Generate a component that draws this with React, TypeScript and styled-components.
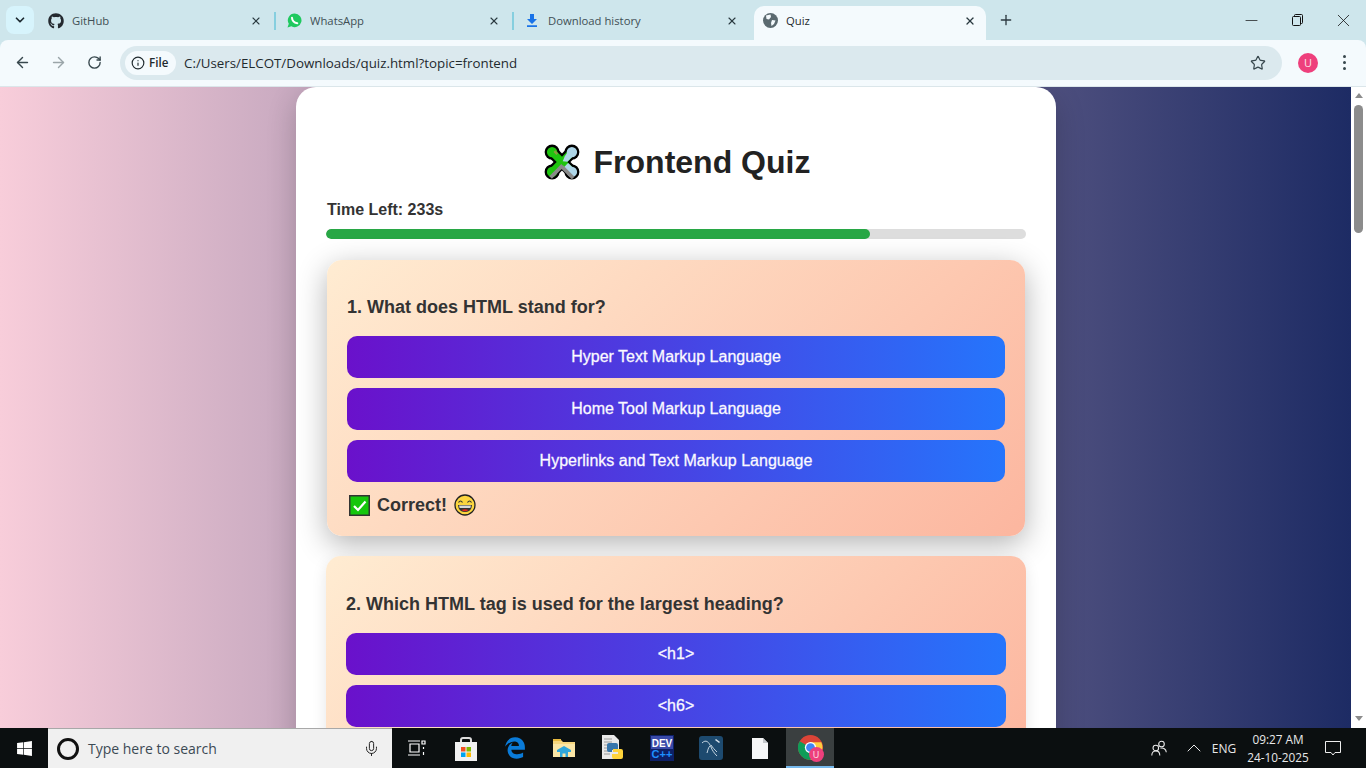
import React from "react";
import styled, { createGlobalStyle } from "styled-components";
import { FaGithub, FaWindows, FaEdgeLegacy } from "react-icons/fa";
import { ArrowLeft, ArrowRight, RotateCw, Info, Star, X, Plus, Minus, Mic, ChevronDown, ChevronUp } from "lucide-react";

const Global = createGlobalStyle`
  html, body { margin: 0; padding: 0; height: 100%; overflow: hidden; }
  #root { height: 100%; }
  * { box-sizing: border-box; }
`;

const Win = styled.div`
  width: 1366px; height: 768px; display: flex; flex-direction: column; overflow: hidden;
  background: #cee6ec; font-family: "Open Sans", "Noto Sans", sans-serif;
`;
const Strip = styled.div`
  height: 40px; flex: none; display: flex; align-items: flex-end; padding-left: 6px; background: #cee6ec;
`;
const TabMenu = styled.button`
  width: 28px; height: 28px; margin-bottom: 6px; border: 0; padding: 0; border-radius: 8px; background: #d7f4fc;
  display: flex; align-items: center; justify-content: center; color: #1d2a30; flex: none;
`;
const Tab = styled.div<{ $active?: boolean; $sep?: boolean }>`
  width: ${p => (p.$active ? 232 : 238)}px; height: 34px; flex: none; display: flex; align-items: center; position: relative;
  padding: 0 8px 5px ${p => (p.$active ? 8 : 14)}px;
  background: ${p => (p.$active ? "#f4fafd" : "transparent")};
  border-radius: ${p => (p.$active ? "10px 10px 0 0" : "0")};
  font-size: 11.3px; color: ${p => (p.$active ? "#1f2a2e" : "#3f4f55")};
  margin-left: ${p => (p.$active ? "6px" : "0")};
  ${p => p.$sep ? `&::after { content: ""; position: absolute; right: -4px; top: 6px; height: 18px; width: 2px; background: #86cfdf; }` : ""}
`;
const FavSlot = styled.span`
  width: 16px; height: 16px; flex: none; margin-right: 8px; display: flex; align-items: center; justify-content: center;
`;
const TabTitle = styled.span`flex: 1; white-space: nowrap; overflow: hidden;`;
const TabClose = styled.span`
  width: 16px; height: 16px; flex: none; display: flex; align-items: center; justify-content: center; color: #2a3a40;
`;
const NewTab = styled.span`
  width: 28px; height: 28px; margin: 0 0 6px 6px; display: flex; align-items: center; justify-content: center; color: #2c3a40; flex: none;
`;
const WinControls = styled.div`
  margin-left: auto; height: 40px; display: flex; align-self: flex-start; align-items: center; color: #111;
`;
const WinBtn = styled.span`
  width: 46px; height: 40px; display: flex; align-items: center; justify-content: center;
`;
const Toolbar = styled.div`
  height: 47px; flex: none; background: #f4fafd; border-radius: 8px 8px 0 0; display: flex; align-items: center;
  padding: 0 6px 1px 4px; border-bottom: 1px solid #dbe6ea;
`;
const NavBtn = styled.span<{ $off?: boolean }>`
  width: 36px; height: 34px; flex: none; display: flex; align-items: center; justify-content: center;
  color: ${p => (p.$off ? "#9aa5a9" : "#37474d")};
`;
const Omni = styled.div`
  margin-left: 8px; width: 1162px; height: 34px; flex: none; background: #dbe9ee; border-radius: 17px; display: flex; align-items: center; padding: 0 16px 0 5px;
`;
const Chip = styled.span`
  height: 24px; width: 51px; flex: none; background: #f4fafd; border-radius: 12px; display: flex; align-items: center; gap: 4px; padding-left: 6px;
  font-size: 11.6px; font-weight: 600; color: #1f2a2e;
`;
const Url = styled.span`margin-left: 8px; font-size: 13.32px; color: #1f2a2e; flex: 1; white-space: nowrap;`;
const Avatar = styled.span<{ $size?: number }>`
  width: ${p => p.$size ?? 20}px; height: ${p => p.$size ?? 20}px; border-radius: 50%; background: #ee3f7c; color: #fbe3ea;
  display: flex; align-items: center; justify-content: center; font-size: ${p => (p.$size ? 9 : 11)}px; flex: none;
`;
const AvatarSlot = styled.span`margin-left: 16px; flex: none;`;
const Dots = styled.span`
  margin-left: 19px; width: 14px; height: 20px; flex: none; display: flex; flex-direction: column; gap: 3px; align-items: center; justify-content: center;
`;
const Dot = styled.i`width: 3px; height: 3px; border-radius: 50%; background: #37474d; display: block;`;

const Viewport = styled.div`height: 641px; flex: none; display: flex; overflow: hidden;`;
const Page = styled.div`
  flex: 1; min-width: 0; overflow: hidden; display: flex; justify-content: center;
  background: linear-gradient(to right, #f8cdda, #1d2b64);
  font-family: "Liberation Sans", Arial, sans-serif;
`;
const Card = styled.main`
  width: 760px; flex: none; align-self: flex-start; background: #fff; border-radius: 20px; padding: 30px; box-shadow: 0 10px 30px rgba(0,0,0,.2); margin-left: 1px;
`;
const Title = styled.h1`
  margin: 24px 0 18px; padding-left: 1px; font-size: 32px; line-height: 42px; font-weight: 700; color: #222; text-align: center;
  display: flex; justify-content: center; align-items: center; gap: 13px;
`;
const Timer = styled.div`font-size: 16px; font-weight: 700; color: #333; line-height: 18px; margin-bottom: 10px; padding-left: 1px;`;
const Track = styled.div`height: 10px; border-radius: 5px; background: #ddd; overflow: hidden;`;
const Fill = styled.div`height: 100%; background: #28a745; border-radius: 5px;`;
const QCard = styled.section<{ $hover?: boolean }>`
  margin: ${p => (p.$hover ? "21px 1px 20px" : "0")};
  padding: ${p => (p.$hover ? "20px 20px 18px" : "20px")};
  border-radius: 15px;
  background: linear-gradient(135deg, #ffecd2, #fcb69f);
  box-shadow: ${p => (p.$hover ? "0 8px 30px rgba(0,0,0,.3)" : "0 5px 15px rgba(0,0,0,.1)")};
`;
const Question = styled.h3<{ $top: number }>`
  margin: ${p => p.$top}px 0 18px; font-size: 18px; line-height: 21px; font-weight: 700; color: #333;
`;
const Options = styled.div`display: flex; flex-direction: column; gap: 10px;`;
const Option = styled.button`
  height: 42px; width: 100%; border: 0; border-radius: 10px; color: #fff; font: 400 16px "Liberation Sans", Arial, sans-serif;
  -webkit-text-stroke: .3px #f0ecff;
  background: linear-gradient(90deg, #6a11cb, #2575fc);
`;
const Result = styled.div`
  margin-top: 10px; height: 26px; padding-left: 2px; display: flex; align-items: center; gap: 7px; font-size: 18px; font-weight: 700; color: #333;
`;

const Scroll = styled.div`
  width: 15px; flex: none; background: #fff; display: flex; flex-direction: column; align-items: center; padding-top: 6px;
`;
const Thumb = styled.div`width: 9px; height: 128px; border-radius: 5px; background: #8c8c8c; margin-top: 7px; flex: none;`;
const ArrowTri = styled.div<{ $down?: boolean }>`
  width: 0; height: 0; flex: none; border-left: 4.5px solid transparent; border-right: 4.5px solid transparent;
  ${p => p.$down ? "border-top: 5px solid #8c8c8c; margin-top: auto; margin-bottom: 7px;" : "border-bottom: 5px solid #8c8c8c;"}
`;

const Taskbar = styled.div`
  height: 40px; flex: none; background: #0b0f10; display: flex; align-items: center; color: #fff;
  font-family: "Open Sans", "Noto Sans", sans-serif;
`;
const Start = styled.span`width: 48px; height: 40px; flex: none; display: flex; align-items: center; justify-content: center; color: #fff;`;
const Search = styled.div`
  width: 344px; height: 40px; flex: none; background: #f0f0f0; border-top: 1px solid #a8a8a8; display: flex; align-items: center; padding: 0 12px 0 9px; color: #3c4a54; font-size: 14px;
`;
const Cortana = styled.span`width: 22px; height: 22px; border-radius: 50%; border: 3px solid #111; flex: none; margin-right: 9px;`;
const SearchText = styled.span`flex: 1;`;
const TaskItem = styled.span<{ $active?: boolean }>`
  width: ${p => (p.$active ? 48 : 49)}px; height: 40px; flex: none; display: flex; align-items: center; justify-content: center;
  ${p => p.$active ? "margin-left: 2px; background: #3a3f40; border-bottom: 2px solid #76b9ed;" : ""}
`;
const Tray = styled.div`margin-left: auto; display: flex; align-items: center; height: 40px;`;
const TrayItem = styled.span<{ $w: number }>`
  width: ${p => p.$w}px; height: 40px; flex: none; display: flex; align-items: center; justify-content: center; font-size: 12px; color: #e8e8e8;
`;
const Clock = styled.span`
  width: 80px; margin-left: 7px; flex: none; text-align: center; font-size: 11.8px; line-height: 18px; color: #e8e8e8;
`;
const BadgeHolder = styled.span`position: relative; width: 25px; height: 25px; display: block;`;
const BadgeSlot = styled.span`position: absolute; right: -1px; bottom: -2px;`;

const Puzzle = () => (
  <svg width="38" height="36" viewBox="0 0 38 36">
    <g transform="rotate(45 19 18)">
      <g fill="#000">
        <rect x="5" y="12" width="28" height="12" />
        <rect x="13" y="4" width="12" height="28" />
        <circle cx="5" cy="18" r="7.500" />
        <circle cx="33" cy="18" r="7.500" />
        <circle cx="19" cy="4" r="7.500" />
        <circle cx="19" cy="32" r="7.500" />
      </g>
      <g fill="#1fc40f">
        <rect x="5" y="14.300" width="28" height="7.400" />
        <rect x="15.300" y="4" width="7.400" height="28" />
        <circle cx="5" cy="18" r="5.200" />
        <circle cx="19" cy="32" r="5.200" />
      </g>
      <circle cx="19" cy="4" r="5.200" fill="#aed6e8" />
      <path d="M15.300 4 H22.700 V14 L19 17 L17 12Z" fill="#aed6e8" />
      <circle cx="33" cy="18" r="5.200" fill="#aed6e8" />
      <path d="M24 14.300 H33 V21 H24Z" fill="#aed6e8" />
      <path d="M22 19.500 H38.200 V23.300 H22Z M20 20 H23.700 V37 H20Z" fill="#8a8a8a" />
      <path d="M6 14.500 L10 14.500 L10 17 L6 17Z" fill="#b98a50" opacity=".7" />
    </g>
  </svg>
);
const CheckBox = () => (
  <svg width="21" height="21" viewBox="0 0 21 21">
    <rect x=".75" y=".75" width="19.5" height="19.5" fill="#16c60c" stroke="#333" strokeWidth="1.5" />
    <path d="M5 11 L9 15 L16.5 6.5" fill="none" stroke="#fff" strokeWidth="2.2" />
  </svg>
);
const Grin = () => (
  <svg width="22" height="22" viewBox="0 0 22 22">
    <circle cx="11" cy="11" r="10" fill="#fcd53f" stroke="#222" strokeWidth="1.3" />
    <path d="M4.5 8.5 Q6.5 5.5 8.5 8.5 M13.5 8.5 Q15.5 5.5 17.5 8.5" fill="none" stroke="#333" strokeWidth="1.2" />
    <path d="M4 11 H18 Q17.5 18 11 18 Q4.5 18 4 11Z" fill="#333" />
    <path d="M5 11.6 H17 L16.4 14 H5.6Z" fill="#d8d8d8" />
    <path d="M7.5 16 Q11 14.5 14.5 16 Q11 18.500 7.5 16Z" fill="#e8261c" />
  </svg>
);
const WhatsIcon = () => (
  <svg width="15" height="15" viewBox="0 0 15 15">
    <path d="M7.700 .5a6.800 6.800 0 1 1-3.300 12.750L.5 14.500l1.300-3.700A6.800 6.800 0 0 1 7.700 .5z" fill="#1fc95f" />
    <path d="M5 4.700 Q5.200 9.300 10.300 10.300" fill="none" stroke="#fff" strokeWidth="2" strokeLinecap="round" />
  </svg>
);
const DownloadIcon = () => (
  <svg width="12" height="13" viewBox="0 0 12 13"><path d="M4 0h4v5h3L6 10 1 5h3zM1 11.200h10V13H1z" fill="#1a73e8" /></svg>
);
const GlobeFav = () => (
  <svg width="15" height="15" viewBox="0 0 15 15">
    <circle cx="7.500" cy="7.500" r="7.500" fill="#5b6a70" />
    <path d="M3 2.500 L7.500 1.500 L8 4 L6 6.500 L3.500 6 Z M9 7 L12.500 7.500 L11 11 L8.500 13 L8 10 Z" fill="#f4fafd" />
  </svg>
);
const Restore = () => (
  <svg width="11" height="12" viewBox="0 0 11 12" fill="none" stroke="#111"><rect x=".5" y="2.500" width="8" height="9" rx="1" /><path d="M2.500 2.500V1.500a1 1 0 0 1 1-1h6a1 1 0 0 1 1 1v7a1 1 0 0 1-1 1h-1" /></svg>
);
const StoreIcon = () => (
  <svg width="24" height="25" viewBox="0 0 24 25">
    <path d="M7 7V4a2 2 0 0 1 2-2h6a2 2 0 0 1 2 2v3" fill="none" stroke="#ddd" strokeWidth="2" />
    <rect x="1" y="6" width="22" height="19" fill="#f1f1f1" />
    <rect x="7" y="11" width="4.500" height="4.500" fill="#f25022" /><rect x="12.500" y="11" width="4.500" height="4.500" fill="#7fba00" />
    <rect x="7" y="16.500" width="4.500" height="4.500" fill="#00a4ef" /><rect x="12.500" y="16.500" width="4.500" height="4.500" fill="#ffb900" />
  </svg>
);
const FolderIcon = () => (
  <svg width="22" height="20" viewBox="0 0 22 20">
    <path d="M0 2h8l2 2h12v15H0z" fill="#f6d77f" /><path d="M0 1h8v2H0z" fill="#e8b93f" />
    <path d="M0 6h22v13H0z" fill="#fbe6a6" />
    <path d="M4 12l7-4 7 4v2h-3v5h-2.500v-3.500h-3V19H7v-5H4z" fill="#2fa7dc" />
  </svg>
);
const PyFile = () => (
  <svg width="24" height="26" viewBox="0 0 24 26">
    <path d="M1 0h12l5 5v19H1z" fill="#e9e9e9" />
    <path d="M3 4h8M3 7h8M3 10h8M3 13h6M3 16h6M3 19h6" stroke="#9a9a9a" />
    <path d="M8 8h7a2 2 0 0 1 2 2v5H11v2H8a2 2 0 0 1-2-2V10a2 2 0 0 1 2-2z" fill="#3776ab" />
    <path d="M12 14h8a2 2 0 0 1 2 2v6a2 2 0 0 1-2 2h-7a2 2 0 0 1-2-2v-3h6v-2h-5z" fill="#ffd43b" />
  </svg>
);
const DevCpp = () => (
  <svg width="24" height="26" viewBox="0 0 24 26">
    <rect width="24" height="26" fill="#0d1f66" />
    <rect x="1" y="1" width="22" height="13" fill="#3a4aa8" />
    <text x="12" y="11.500" textAnchor="middle" fontFamily="Liberation Sans, sans-serif" fontWeight="700" fontSize="10" fill="#fff">DEV</text>
    <text x="12" y="22.500" textAnchor="middle" fontFamily="Liberation Sans, sans-serif" fontWeight="700" fontSize="11" fill="#1e90ff">C++</text>
  </svg>
);
const MySql = () => (
  <svg width="24" height="24" viewBox="0 0 24 24">
    <rect width="24" height="24" rx="3" fill="#1d4a6f" />
    <path d="M3 7 C7 3 10 6 12 11 C13 14 15 17 18 20 M11 10 C9 12 9 14 8 17 M12 9 C14 12 15 13 18 16" fill="none" stroke="#d7e4ee" strokeWidth=".9" />
    <path d="M17 3l4 3-1 1-4-3z" fill="#d7e4ee" />
  </svg>
);
const PlainFile = () => (
  <svg width="16" height="21" viewBox="0 0 16 21"><path d="M0 0h11l5 5v16H0z" fill="#f5f6f7" /><path d="M11 0l5 5h-5z" fill="#c4c8cc" /></svg>
);
const ChromeIcon = () => (
  <svg width="25" height="25" viewBox="0 0 24 24">
    <circle cx="12" cy="12" r="12" fill="#db4437" />
    <path d="M12 12 L1.600 6 A12 12 0 0 0 12 24 L18 13Z" fill="#0f9d58" />
    <path d="M12 7 H22.400 A12 12 0 0 1 12 24 L18 13Z" fill="#ffcd40" />
    <circle cx="12" cy="12" r="5.400" fill="#fff" /><circle cx="12" cy="12" r="4.200" fill="#4285f4" />
  </svg>
);
const People = () => (
  <svg width="16" height="16" viewBox="0 0 16 16" fill="none" stroke="#e8e8e8" strokeWidth="1.1">
    <circle cx="10.500" cy="4" r="2.800" /><circle cx="4.800" cy="8" r="2.800" />
    <path d="M0.800 15.500c0-2.600 1.600-4.600 4-4.600s4 2 4 4.600M9.500 8.200c2.800-.8 5.500 1 5.800 4" />
  </svg>
);
const Notify = () => (
  <svg width="16" height="15" viewBox="0 0 16 15" fill="none" stroke="#eee" strokeWidth="1"><path d="M.5.5h15v11H10L8 14l-2-2.500H.5z" /></svg>
);

const Q1 = ["Hyper Text Markup Language", "Home Tool Markup Language", "Hyperlinks and Text Markup Language"];
const Q2 = ["<h1>", "<h6>"];

export default function App() {
  return (
    <Win>
      <Global />
      <Strip>
        <TabMenu><ChevronDown size={14} strokeWidth={3} /></TabMenu>
        <Tab $sep><FavSlot><FaGithub size={16} color="#24292f" /></FavSlot><TabTitle>GitHub</TabTitle><TabClose><X size={12} strokeWidth={2.2} /></TabClose></Tab>
        <Tab $sep><FavSlot><WhatsIcon /></FavSlot><TabTitle>WhatsApp</TabTitle><TabClose><X size={12} strokeWidth={2.2} /></TabClose></Tab>
        <Tab><FavSlot><DownloadIcon /></FavSlot><TabTitle>Download history</TabTitle><TabClose><X size={12} strokeWidth={2.2} /></TabClose></Tab>
        <Tab $active><FavSlot><GlobeFav /></FavSlot><TabTitle>Quiz</TabTitle><TabClose><X size={12} strokeWidth={2.6} /></TabClose></Tab>
        <NewTab><Plus size={16} strokeWidth={2} /></NewTab>
        <WinControls>
          <WinBtn><Minus size={19} strokeWidth={.9} /></WinBtn>
          <WinBtn><Restore /></WinBtn>
          <WinBtn><X size={21} strokeWidth={.9} /></WinBtn>
        </WinControls>
      </Strip>
      <Toolbar>
        <NavBtn><ArrowLeft size={17} strokeWidth={2} /></NavBtn>
        <NavBtn $off><ArrowRight size={17} strokeWidth={2} /></NavBtn>
        <NavBtn><RotateCw size={15} strokeWidth={2.2} /></NavBtn>
        <Omni>
          <Chip><Info size={14} strokeWidth={2} />File</Chip>
          <Url>C:/Users/ELCOT/Downloads/quiz.html?topic=frontend</Url>
          <Star size={16} strokeWidth={1.8} color="#37474d" />
        </Omni>
        <AvatarSlot><Avatar>U</Avatar></AvatarSlot>
        <Dots><Dot /><Dot /><Dot /></Dots>
      </Toolbar>
      <Viewport>
        <Page>
          <Card>
            <Title><Puzzle />Frontend Quiz</Title>
            <Timer>Time Left: 233s</Timer>
            <Track><Fill style={{ width: `${(233 / 300) * 100}%` }} /></Track>
            <QCard $hover>
              <Question $top={17}>1. What does HTML stand for?</Question>
              <Options>{Q1.map(o => <Option key={o}>{o}</Option>)}</Options>
              <Result><CheckBox />Correct!<Grin /></Result>
            </QCard>
            <QCard>
              <Question $top={18}>2. Which HTML tag is used for the largest heading?</Question>
              <Options>{Q2.map(o => <Option key={o}>{o}</Option>)}</Options>
            </QCard>
          </Card>
        </Page>
        <Scroll><ArrowTri /><Thumb /><ArrowTri $down /></Scroll>
      </Viewport>
      <Taskbar>
        <Start><FaWindows size={17} /></Start>
        <Search><Cortana /><SearchText>Type here to search</SearchText><Mic size={17} strokeWidth={1.4} color="#222" /></Search>
        <TaskItem>
          <svg width="18" height="16" viewBox="0 0 18 16" fill="none" stroke="#fff" strokeWidth="1.2"><path d="M0 1h12M0 15h12M2 4h9v8H2zM14 1h3v3h-3zM15.500 7v2M15.500 12v3" /></svg>
        </TaskItem>
        <TaskItem><StoreIcon /></TaskItem>
        <TaskItem><FaEdgeLegacy size={22} color="#0a7bd8" /></TaskItem>
        <TaskItem><FolderIcon /></TaskItem>
        <TaskItem><PyFile /></TaskItem>
        <TaskItem><DevCpp /></TaskItem>
        <TaskItem><MySql /></TaskItem>
        <TaskItem><PlainFile /></TaskItem>
        <TaskItem $active><BadgeHolder><ChromeIcon /><BadgeSlot><Avatar $size={15}>U</Avatar></BadgeSlot></BadgeHolder></TaskItem>
        <Tray>
          <TrayItem $w={24}><People /></TrayItem>
          <TrayItem $w={46}><ChevronUp size={24} strokeWidth={1} /></TrayItem>
          <TrayItem $w={14}>ENG</TrayItem>
          <Clock>09:27 AM<br />24-10-2025</Clock>
          <TrayItem $w={30}><Notify /></TrayItem>
          <TrayItem $w={18} />
        </Tray>
      </Taskbar>
    </Win>
  );
}
